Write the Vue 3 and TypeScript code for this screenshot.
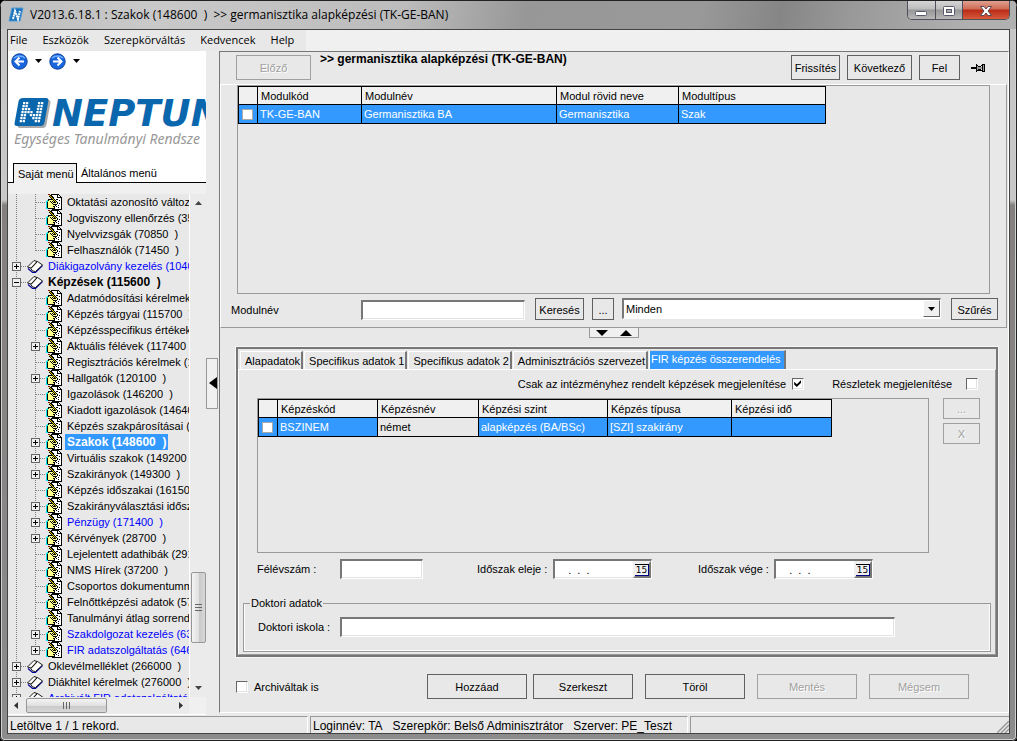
<script setup lang="ts">
import { ref } from 'vue'

interface TreeRow {
  label: string
  level: 1 | 2
  box?: '+' | '-'
  tone?: 'link' | 'strong' | 'selected'
  last?: boolean
}

const menu = ['File', 'Eszközök', 'Szerepkörváltás', 'Kedvencek', 'Help']

const tree: TreeRow[] = [
  { label: 'Oktatási azonosító változa', level: 2 },
  { label: 'Jogviszony ellenőrzés (350', level: 2 },
  { label: 'Nyelvvizsgák (70850  )', level: 2 },
  { label: 'Felhasználók (71450  )', level: 2, last: true },
  { label: 'Diákigazolvány kezelés (1040', level: 1, box: '+', tone: 'link' },
  { label: 'Képzések (115600  )', level: 1, box: '-', tone: 'strong' },
  { label: 'Adatmódosítási kérelmek', level: 2 },
  { label: 'Képzés tárgyai (115700  )', level: 2 },
  { label: 'Képzésspecifikus értékek', level: 2 },
  { label: 'Aktuális félévek (117400', level: 2, box: '+' },
  { label: 'Regisztrációs kérelmek (1', level: 2 },
  { label: 'Hallgatók (120100  )', level: 2, box: '+' },
  { label: 'Igazolások (146200  )', level: 2 },
  { label: 'Kiadott igazolások (14640', level: 2 },
  { label: 'Képzés szakpárosításai (1', level: 2 },
  { label: 'Szakok (148600  )', level: 2, box: '+', tone: 'selected' },
  { label: 'Virtuális szakok (149200  )', level: 2, box: '+' },
  { label: 'Szakirányok (149300  )', level: 2, box: '+' },
  { label: 'Képzés időszakai (161500', level: 2 },
  { label: 'Szakirányválasztási idősza', level: 2, box: '+' },
  { label: 'Pénzügy (171400  )', level: 2, box: '+', tone: 'link' },
  { label: 'Kérvények (28700  )', level: 2, box: '+' },
  { label: 'Lejelentett adathibák (291', level: 2 },
  { label: 'NMS Hírek (37200  )', level: 2 },
  { label: 'Csoportos dokumentumme', level: 2 },
  { label: 'Felnőttképzési adatok (57', level: 2 },
  { label: 'Tanulmányi átlag sorrend (', level: 2 },
  { label: 'Szakdolgozat kezelés (637', level: 2, box: '+', tone: 'link' },
  { label: 'FIR adatszolgáltatás (6460', level: 2, box: '+', tone: 'link', last: true },
  { label: 'Oklevélmelléklet (266000  )', level: 1, box: '+' },
  { label: 'Diákhitel kérelmek (276000  )', level: 1, box: '+' },
  { label: 'Archivált FIR adatszolgáltatás', level: 1, box: '+', tone: 'link' },
]

// Form icon: a hand with a pen over a sheet, one character per pixel.
const formBitmap = [
  '..RR.KKKKKKKK...',
  '...GKKWWWWWKWK..',
  '...KGKKWWWWKWWK.',
  '....KGKKWWWKKKKK',
  '.....KGKWWWWWWWK',
  '..KKKKKGKWKKWWWK',
  '.CKYYYYKGKWWWKWK',
  'CCYYKYKYKGKWWWWK',
  'CKYYYKYKKKYKWWWK',
  'CKYYYYKYYYYKWKWK',
  'CKYYYYYKKKKWWWWK',
  'CKYYYYYYYKWWKWWK',
  'CKYYYYYKKWKWWWWK',
  'CKYYYYYYKWWWKWWK',
  'CCKKKKKKKWWWWWWK',
  '......KKKKKKKKKK',
]
const inks: Record<string, string> = { K: '#000', W: '#fff', Y: '#ffff90', C: '#00e0e8', R: '#901020', G: '#e8c800' }
const formLayers = Object.entries(inks).map(([key, fill]) => ({
  fill,
  d: formBitmap.flatMap((line, y) => [...line].map((c, x) => (c === key ? `M${x} ${y}h1v1h-1z` : ''))).join(''),
}))

const logoDots: [number, number][] = []
const pattern = ['1100011', '1100011', '1110011', '1111011', '1101111', '1100111', '1100011']
pattern.forEach((line, y) => [...line].forEach((c, x) => c === '1' && logoDots.push([x, y])))

const tabs = ['Alapadatok', 'Specifikus adatok 1', 'Specifikus adatok 2', 'Adminisztrációs szervezet', 'FIR képzés összerendelés']
const activeTab = ref(4)
const onlyAssigned = ref(true)
const details = ref(false)
const archived = ref(false)
const filter = ref('Minden')
const dateStart = ref('   .  .  .')
const dateEnd = ref('   .  .  .')
</script>

<template>
  <div class="window">
    <header class="titlebar">
      <svg class="app-icon" width="16" height="16" viewBox="0 0 16 16">
        <path d="M4 1h11l-3 13H1z" fill="#1c74bd" stroke="#4f9bd6" />
        <path d="M5 12l2-8 3 8 2-8" fill="none" stroke="#fff" stroke-width="2" stroke-dasharray="2 0.6" />
      </svg>
      <h1>V2013.6.18.1 : Szakok (148600&nbsp; )&nbsp; &gt;&gt; germanisztika alapképzési (TK-GE-BAN)</h1>
      <div class="caption-buttons">
        <button type="button" aria-label="Kis méret">
          <svg width="27" height="17" viewBox="0 0 27 17"><rect x="7.500" y="9.500" width="11" height="4" rx="1" fill="#fff" stroke="#55596b" /></svg>
        </button>
        <button type="button" aria-label="Teljes méret">
          <svg width="26" height="17" viewBox="0 0 26 17">
            <rect x="7.500" y="4.500" width="11" height="9" rx="1" fill="#fff" stroke="#55596b" />
            <rect x="10.500" y="7.500" width="5" height="3" fill="#aaa" stroke="#55596b" />
          </svg>
        </button>
        <button type="button" class="close" aria-label="Bezárás">
          <svg width="46" height="17" viewBox="0 0 46 17"><path d="M17.500 4.500h3.500l2 2.500 2-2.500h3.500l-3.500 4.500 3.500 4.500h-3.500l-2-2.500-2 2.500h-3.500l3.500-4.500z" fill="#fff" stroke="#5b4a55" /></svg>
        </button>
      </div>
    </header>

    <div class="client">
      <nav class="menubar">
        <div class="menu-items">
          <button v-for="m in menu" :key="m" type="button">{{ m }}</button>
        </div>
      </nav>

      <div class="main">
        <aside class="side">
          <div class="nav-tools">
            <button type="button" aria-label="Vissza">
              <svg width="17" height="17" viewBox="0 0 17 17">
                <circle cx="8.500" cy="8.500" r="7.700" fill="#1a66dd" stroke="#0b3f9c" />
                <path d="M3 5a7 5 0 0 1 11 0" stroke="#6fb0ff" fill="none" stroke-width="1.500" />
                <path d="M13 8.500H5M8.500 4.500l-4 4 4 4" fill="none" stroke="#fff" stroke-width="2" />
              </svg>
            </button>
            <svg class="drop" width="7" height="4" viewBox="0 0 7 4"><path d="M0 0h7L3.500 4z" /></svg>
            <button type="button" aria-label="Előre">
              <svg width="17" height="17" viewBox="0 0 17 17">
                <circle cx="8.500" cy="8.500" r="7.700" fill="#1a66dd" stroke="#0b3f9c" />
                <path d="M3 5a7 5 0 0 1 11 0" stroke="#6fb0ff" fill="none" stroke-width="1.500" />
                <path d="M4 8.500h8M8.500 4.500l4 4-4 4" fill="none" stroke="#fff" stroke-width="2" />
              </svg>
            </button>
            <svg class="drop" width="7" height="4" viewBox="0 0 7 4"><path d="M0 0h7L3.500 4z" /></svg>
          </div>

          <div class="brand">
            <div class="brand-name">
              <svg width="38" height="33" viewBox="0 0 38 33">
                <path d="M11 3h23q3 0 2.400 3l-4 22q-.6 3-4 3H6q-3 0-2.400-3l4-22Q8 3 11 3z" fill="#aaa" />
                <path d="M9 1h23q3 0 2.400 3l-4 22q-.6 3-4 3H3q-3 0-2.400-3l4-22Q5.500 1 9 1z" fill="#0a67ae" />
                <g fill="#fff">
                  <rect v-for="([x, y], i) in logoDots" :key="i" :x="9 + x * 3 - y * 0.55" :y="5 + y * 3" width="2.300" height="2.300" rx="0.600" />
                </g>
              </svg>
              <span>NEPTUN</span>
            </div>
            <p>Egységes Tanulmányi Rendsze</p>
          </div>

          <div class="side-tabs" role="tablist">
            <button type="button" role="tab" aria-selected="true" class="on">Saját menü</button>
            <button type="button" role="tab" aria-selected="false">Általános menü</button>
          </div>

          <div class="tree-wrap">
            <ul class="tree" role="tree">
              <li v-for="(row, i) in tree" :key="i" role="treeitem" :class="row.tone">
                <svg :width="row.level === 1 ? 38 : 57" height="16" :viewBox="`0 0 ${row.level === 1 ? 38 : 57} 16`" shape-rendering="crispEdges">
                  <g stroke="#808080" stroke-dasharray="1 1">
                    <path d="M8.500 0v16" />
                    <path v-if="row.level === 1" d="M9 8.500h10" />
                    <path v-if="row.level === 2" :d="row.last ? 'M27.500 0v9' : 'M27.500 0v16'" />
                    <path v-if="row.level === 2" d="M28 8.500h10" />
                    <path v-if="row.box === '-'" d="M27.500 13v3" />
                  </g>
                  <g v-if="row.box" :transform="`translate(${row.level === 1 ? 4 : 23} 4)`">
                    <rect x="0.500" y="0.500" width="8" height="8" fill="#f0f0f0" stroke="#666" />
                    <path :d="row.box === '+' ? 'M2 4.500h5M4.500 2v5' : 'M2 4.500h5'" stroke="#000" />
                  </g>
                  <g v-if="row.level === 1" transform="translate(19 1)" shape-rendering="auto">
                    <path d="M1 9.500l4.500 4h3l7-7" fill="none" stroke="#0000a0" stroke-width="1.200" />
                    <path d="M.5 8L7 1.500l3 1L4 9z" fill="#fff" stroke="#000" stroke-width="0.900" />
                    <path d="M4 9.500l6.500-7 5 3.500-7 6.500-3-.5z" fill="#fff" stroke="#000" stroke-width="0.900" />
                  </g>
                  <g v-else transform="translate(38 0)">
                    <path v-for="layer in formLayers" :key="layer.fill" :d="layer.d" :fill="layer.fill" />
                  </g>
                </svg>
                <span>{{ row.label }}</span>
              </li>
            </ul>
            <div class="vscroll">
              <svg width="7" height="4" viewBox="0 0 7 4"><path d="M0 4h7L3.500 0z" fill="#444" /></svg>
              <div class="v-track"><i class="thumb"><b></b></i></div>
              <svg width="7" height="4" viewBox="0 0 7 4"><path d="M0 0h7L3.500 4z" fill="#444" /></svg>
            </div>
          </div>
          <div class="hscroll">
            <svg width="4" height="7" viewBox="0 0 4 7"><path d="M4 0v7L0 3.500z" fill="#333" /></svg>
            <div class="h-track"><i class="thumb"><b></b></i></div>
            <svg width="4" height="7" viewBox="0 0 4 7"><path d="M0 0v7l4-3.500z" fill="#333" /></svg>
          </div>
        </aside>

        <div class="divider">
          <button type="button" aria-label="Menü elrejtése">
            <svg width="8" height="12" viewBox="0 0 8 12"><path d="M8 0v12L0 6z" /></svg>
          </button>
        </div>

        <main class="work">
          <div class="work-head">
            <button type="button" class="btn prev" disabled>Előző</button>
            <h2>&gt;&gt; germanisztika alapképzési (TK-GE-BAN)</h2>
            <button type="button" class="btn refresh">Frissítés</button>
            <button type="button" class="btn next">Következő</button>
            <button type="button" class="btn up">Fel</button>
            <button type="button" class="pin" aria-label="Rögzítés">
              <svg width="15" height="10" viewBox="0 0 15 10" shape-rendering="crispEdges">
                <path d="M0 4h5v2H0zM5 1h1v8H5zM6 2h1v1H6zM6 7h1v1H6zM7 3h3v1H7zM7 6h3v2H7zM10 2h1v1h-1zM10 7h1v1h-1zM11 1h3v1h-3zM11 8h3v1h-3zM11 2h1v6h-1zM13 2h1v6h-1z" />
                <path d="M6 3h1v4H6zM7 4h4v2H7zM12 2h1v6h-1z" fill="#999" />
              </svg>
            </button>
          </div>

          <section class="upper">
            <div class="list list-top">
              <table>
                <colgroup><col class="w19" /><col class="w104" /><col class="w195" /><col class="w122" /><col class="w147" /></colgroup>
                <thead>
                  <tr><th></th><th>Modulkód</th><th>Modulnév</th><th>Modul rövid neve</th><th>Modultípus</th></tr>
                </thead>
                <tbody>
                  <tr>
                    <td><input type="checkbox" class="flat" aria-label="TK-GE-BAN kijelölése" /></td>
                    <td>TK-GE-BAN</td><td>Germanisztika BA</td><td>Germanisztika</td><td>Szak</td>
                  </tr>
                </tbody>
              </table>
            </div>
            <div class="filter">
              <label for="modulnev">Modulnév</label>
              <input id="modulnev" type="text" class="sunk" />
              <button type="button" class="btn search">Keresés</button>
              <button type="button" class="btn more">...</button>
              <div class="combo">
                <select v-model="filter" aria-label="Szűrő"><option>Minden</option></select>
                <span><svg width="7" height="4" viewBox="0 0 7 4"><path d="M0 0h7L3.500 4z" /></svg></span>
              </div>
              <button type="button" class="btn filt">Szűrés</button>
            </div>
          </section>

          <div class="h-divider">
            <button type="button" aria-label="Panel méretezése">
              <svg width="12" height="6" viewBox="0 0 12 6"><path d="M0 0h12L6 6z" /></svg>
              <svg width="12" height="6" viewBox="0 0 12 6"><path d="M0 6h12L6 0z" /></svg>
            </button>
          </div>

          <section class="tabset">
            <div class="tabs" role="tablist">
              <button
                v-for="(t, i) in tabs"
                :key="t"
                type="button"
                role="tab"
                :aria-selected="i === activeTab"
                :class="{ on: i === activeTab }"
                @click="activeTab = i"
              >{{ t }}</button>
            </div>
            <div class="page">
              <div class="options">
                <label for="assigned">Csak az intézményhez rendelt képzések megjelenítése</label>
                <input id="assigned" v-model="onlyAssigned" type="checkbox" />
                <label for="details" class="second">Részletek megjelenítése</label>
                <input id="details" v-model="details" type="checkbox" class="far" />
              </div>
              <div class="list-row">
                <div class="list">
                  <table>
                    <colgroup><col class="w19" /><col class="w100" /><col class="w101" /><col class="w129" /><col class="w124" /><col class="w100" /></colgroup>
                    <thead>
                      <tr><th></th><th>Képzéskód</th><th>Képzésnév</th><th>Képzési szint</th><th>Képzés típusa</th><th>Képzési idő</th></tr>
                    </thead>
                    <tbody>
                      <tr>
                        <td><input type="checkbox" class="flat" aria-label="BSZINEM kijelölése" /></td>
                        <td>BSZINEM</td><td class="current">német</td><td>alapképzés (BA/BSc)</td><td>[SZI] szakirány</td><td></td>
                      </tr>
                    </tbody>
                  </table>
                </div>
                <div class="list-actions">
                  <button type="button" class="btn" disabled>...</button>
                  <button type="button" class="btn" disabled>X</button>
                </div>
              </div>
              <div class="fields">
                <label for="felev" class="lead">Félévszám :</label>
                <input id="felev" type="text" class="sunk felev" />
                <label for="eleje" class="start">Időszak eleje :</label>
                <div class="date sunk">
                  <input id="eleje" v-model="dateStart" type="text" />
                  <button type="button" aria-label="Időszak eleje naptár"><span>15</span></button>
                </div>
                <label for="vege" class="end">Időszak vége :</label>
                <div class="date sunk">
                  <input id="vege" v-model="dateEnd" type="text" />
                  <button type="button" aria-label="Időszak vége naptár"><span>15</span></button>
                </div>
              </div>
              <fieldset>
                <legend>Doktori adatok</legend>
                <label for="iskola">Doktori iskola :</label>
                <input id="iskola" type="text" class="sunk" />
              </fieldset>
            </div>
          </section>

          <footer class="actions">
            <input id="archiv" v-model="archived" type="checkbox" />
            <label for="archiv">Archiváltak is</label>
            <div class="action-buttons">
              <button type="button" class="btn">Hozzáad</button>
              <button type="button" class="btn">Szerkeszt</button>
            </div>
            <div class="action-buttons wide">
              <button type="button" class="btn">Töröl</button>
              <button type="button" class="btn" disabled>Mentés</button>
              <button type="button" class="btn" disabled>Mégsem</button>
            </div>
          </footer>
        </main>
      </div>

      <div class="status">
        <p class="s1">Letöltve 1 / 1 rekord.</p>
        <p class="s2">Loginnév: TA&nbsp;&nbsp; Szerepkör: Belső Adminisztrátor&nbsp;&nbsp; Szerver: PE_Teszt</p>
        <p class="s3">
          <svg width="12" height="12" viewBox="0 0 12 12"><path d="M0 12L12 0M4 12l8-8M8 12l4-4" stroke="#999" stroke-width="1.500" /></svg>
        </p>
      </div>
    </div>
  </div>
</template>

<style>
html,
body,
#app {
  height: 100%;
}
body {
  margin: 0;
  background: #000;
}
</style>

<style scoped>
* {
  box-sizing: border-box;
}
.window {
  min-height: 100%;
  display: flex;
  flex-direction: column;
  padding: 0 7px 7px;
  background: linear-gradient(#c4c4c4 0, #c8c8c8 200px, #84807f 205px, #8c8c8c 100%);
  box-shadow: inset 0 0 0 1px #222, inset 0 0 0 2px #d0d0d0;
  border-radius: 7px 7px 5px 5px;
  font: 11px/14px "Liberation Sans", Arial, sans-serif;
  color: #000;
  overflow: hidden;
}
button,
input,
select {
  font: inherit;
  color: inherit;
  margin: 0;
  padding: 0;
  border: 0;
  border-radius: 0;
  background: none;
}
svg {
  display: block;
  flex: none;
}
label,
h2,
th,
td,
button {
  white-space: nowrap;
}
p,
h1,
h2,
ul {
  margin: 0;
  padding: 0;
}

/* title bar */
.titlebar {
  height: 29px;
  margin: 0 -6px;
  padding: 1px 6px 0;
  display: flex;
  align-items: flex-start;
  background: linear-gradient(100deg, #bdbdbd 0, #c9c9c9 150px, #bcbcbc 400px, #979797 520px, #999 690px, #868686 770px, #999 840px, #b0b0b0 960px);
  border-top: 1px solid #222;
}
.app-icon {
  margin: 5px 6px 0 1px;
}
h1 {
  flex: 1;
  font: 12px/16px "Open Sans", "Noto Sans", sans-serif;
  margin-top: 5px;
  white-space: nowrap;
  overflow: hidden;
}
.caption-buttons {
  display: flex;
  margin-top: -1px;
  border: 1px solid #50505a;
  border-top: 0;
  border-radius: 0 0 5px 5px;
  overflow: hidden;
}
.caption-buttons button {
  height: 18px;
  background: linear-gradient(#d5d5d5 0, #bcbcbc 45%, #969696 50%, #b8b8b8 100%);
  border-right: 1px solid #50505a;
}
.caption-buttons .close {
  border-right: 0;
  background: linear-gradient(#e0a090 0, #cf6a55 45%, #b92a14 50%, #d65a3c 100%);
}

.client {
  flex: 1;
  display: flex;
  flex-direction: column;
  border: 1px solid #444;
  background: #e8e8e8;
}

.menubar {
  height: 21px;
  background: #f0f0f0;
}
.menu-items {
  width: 298px;
  height: 21px;
  padding: 0 2px;
  display: flex;
  gap: 15px;
  background: #e8e8e8;
  font: 11px/19px "Open Sans", "Noto Sans", sans-serif;
}
.menu-items button {
  height: 19px;
}

.main {
  flex: 1;
  display: flex;
  min-height: 0;
}

/* left side */
.side {
  width: 198px;
  flex: none;
  display: flex;
  flex-direction: column;
  padding-bottom: 1px;
  background: #fff;
}
.nav-tools {
  display: flex;
  align-items: center;
  height: 20px;
  padding-left: 3px;
}
.nav-tools .drop {
  margin: 0 7px;
}
.brand {
  height: 92px;
  padding: 26px 0 0 6px;
  overflow: hidden;
}
.brand-name {
  display: flex;
  height: 34px;
  color: #0a67ae;
  font: italic bold 37px/34px "DejaVu Sans", Verdana, sans-serif;
}
.brand p {
  color: #999;
  font: italic 14px/16px "Noto Sans", "Open Sans", sans-serif;
  white-space: nowrap;
}
.side-tabs {
  display: flex;
  align-items: flex-end;
  height: 20px;
  padding-left: 5px;
  box-shadow: inset 0 -1px #000;
}
.side-tabs button {
  height: 20px;
  padding: 0 4px;
}
.side-tabs .on {
  width: 64px;
  border: 1px solid #000;
  border-bottom: 0;
  background: #f0f0f0;
}
.tree-wrap {
  flex: 1 1 0;
  min-height: 0;
  display: flex;
  border-top: 11px solid #f0f0f0;
  background: #e8e8e8;
}
.tree {
  flex: 1;
  min-width: 0;
  list-style: none;
  overflow: hidden;
}
.tree li {
  display: flex;
  height: 16px;
  line-height: 16px;
  white-space: pre;
}
.tree span {
  padding: 0 2px;
}
.tree .link {
  color: #0000ff;
}
.tree .strong,
.tree .selected {
  font-weight: bold;
  font-size: 12px;
}
.tree .selected span {
  background: #3399ff;
  color: #fff;
}
.vscroll {
  width: 17px;
  display: flex;
  flex-direction: column;
  align-items: center;
  padding: 7px 0;
  border-left: 1px solid #fff;
  background: #ebebeb;
}
.v-track {
  flex: 1;
  width: 15px;
  display: flex;
  flex-direction: column;
  justify-content: flex-end;
  padding-bottom: 43px;
}
.thumb {
  display: flex;
  align-items: center;
  justify-content: center;
  border: 1px solid #979797;
  border-radius: 2px;
}
.v-track .thumb {
  height: 71px;
  background: linear-gradient(90deg, #f4f4f4, #e0e0e0 50%, #c8c8c8 51%, #d8d8d8);
}
.v-track b {
  width: 7px;
  height: 8px;
  background: repeating-linear-gradient(#666 0 1px, transparent 1px 3px);
}
.hscroll {
  height: 17px;
  flex: none;
  width: 181px;
  padding: 0 6px;
  display: flex;
  align-items: center;
  background: #ebebeb;
  box-shadow: 17px 0 #f0f0f0;
}
.h-track {
  flex: 1;
  padding-left: 8px;
}
.h-track .thumb {
  width: 81px;
  height: 15px;
  background: linear-gradient(#f4f4f4, #e0e0e0 50%, #c8c8c8 51%, #d8d8d8);
}
.h-track b {
  width: 8px;
  height: 7px;
  background: repeating-linear-gradient(90deg, #666 0 1px, transparent 1px 3px);
}

.divider {
  width: 13px;
  flex: none;
  display: flex;
  align-items: center;
  background: #ebebeb;
}
.divider button {
  width: 12px;
  height: 51px;
  padding-left: 2px;
  border: 1px solid #999;
  background: #f0f0f0;
}

/* right side */
.work {
  flex: 1;
  min-width: 0;
  display: flex;
  flex-direction: column;
  margin-bottom: 2px;
  border-left: 1px solid #777;
  border-top: 1px solid #777;
  border-bottom: 1px solid #fff;
  border-right: 1px solid #fff;
}
.btn {
  border: 1px solid #606060;
  background: #e8e8e8;
  padding: 1px 0 0;
}
.btn:disabled {
  border-color: #a0a0a0;
  color: #a0a0a0;
  text-shadow: 1px 1px #fff;
}
.work-head {
  height: 32px;
  padding: 3px 22px 0 16px;
  display: flex;
  align-items: flex-start;
}
.work-head .btn {
  height: 25px;
  margin-right: 7px;
}
.work-head .prev {
  width: 75px;
  margin-right: 9px;
}
.work-head h2 {
  flex: 1;
  font-size: 12px;
  line-height: 14px;
  margin-top: -3px;
}
.work-head .refresh { width: 49px; }
.work-head .next { width: 65px; }
.work-head .up { width: 41px; margin-right: 11px; }
.pin {
  height: 25px;
}
.upper {
  border: 1px solid #fff;
  border-right-color: #999;
  border-bottom-color: #999;
  margin-right: 1px;
}
.list {
  border: 1px solid #999;
}
.list-top {
  height: 209px;
  margin: 0 16px;
}
table {
  border-collapse: collapse;
  table-layout: fixed;
  width: 0;
}
.w19 { width: 19px; }
.w100 { width: 100px; }
.w101 { width: 101px; }
.w104 { width: 104px; }
.w122 { width: 122px; }
.w124 { width: 124px; }
.w129 { width: 129px; }
.w147 { width: 147px; }
.w195 { width: 195px; }
th,
td {
  border: 1px solid #000;
  text-align: left;
  font-weight: normal;
  height: 18px;
  line-height: 15px;
  padding: 1px 0 0 3px;
}
th {
  background: #f0f0f0;
}
tbody tr {
  background: #3399ff;
  color: #fff;
}
td {
  height: 19px;
  padding-left: 2px;
}
td:first-child {
  padding: 0 0 0 3px;
}
td .flat {
  display: block;
}
.current {
  background: #e8e8e8;
  color: #000;
}
.filter {
  height: 33px;
  padding: 4px 8px 0 10px;
  display: flex;
}
.filter label {
  width: 130px;
  line-height: 24px;
}
.filter .sunk {
  width: 164px;
  margin: 2px 10px 0 0;
}
.filter .btn {
  height: 22px;
}
.search { width: 49px; margin-right: 8px; }
.more { width: 22px; margin-right: 8px; }
.filt { width: 47px; }
.sunk {
  height: 20px;
  background: #fff;
  border: 1px solid #fff;
  border-top: 2px solid #777;
  border-left: 2px solid #777;
  box-shadow: inset -1px -1px #e3e3e3;
}
.combo {
  position: relative;
  flex: 1;
  height: 21px;
  margin-right: 10px;
}
.combo select {
  appearance: none;
  display: block;
  width: 100%;
  height: 21px;
  padding-left: 2px;
  background: #fff;
  border: 1px solid #fff;
  border-top: 2px solid #777;
  border-left: 2px solid #777;
}
.combo span {
  position: absolute;
  right: 1px;
  top: 2px;
  width: 17px;
  height: 17px;
  display: flex;
  align-items: center;
  justify-content: center;
  background: #f0f0f0;
  border: 1px solid #fff;
  border-right-color: #666;
  border-bottom-color: #666;
  pointer-events: none;
}
.h-divider {
  height: 19px;
  display: flex;
  justify-content: center;
  align-items: flex-start;
}
.h-divider button {
  width: 50px;
  height: 10px;
  display: flex;
  align-items: center;
  justify-content: center;
  gap: 12px;
  border: 1px solid #999;
  border-top: 0;
  background: #f0f0f0;
}

.tabset {
  flex: 1;
  display: flex;
  flex-direction: column;
  margin: 0 10px 0 16px;
  border: 2px solid #777;
  outline: 1px solid #f6f6f6;
  padding: 1px 0 0;
}
.tabs {
  display: flex;
  align-items: flex-end;
  height: 19px;
  padding-left: 1px;
}
.tabs button {
  height: 18px;
  padding: 2px 1px 0 4px;
  margin-left: 1px;
  line-height: 15px;
  border-left: 1px solid #fff;
  border-top: 1px solid #fff;
  border-right: 2px solid #777;
}
.tabs .on {
  height: 19px;
  width: 137px;
  text-align: left;
  padding: 0 0 2px 1px;
  border-top: 1px solid #d8d8d8;
  background: #3399ff;
  color: #fff;
}
.page {
  flex: 1;
  display: flex;
  flex-direction: column;
  border: 1px solid #fff;
  border-right-color: #999;
  border-bottom-color: #999;
  padding: 0 4px 2px;
}
.options {
  display: flex;
  align-items: center;
  justify-content: flex-end;
  height: 28px;
  padding-right: 13px;
}
input[type='checkbox'] {
  appearance: none;
  width: 12px;
  height: 12px;
  background: #fff;
  border: 1px solid #fff;
  border-top-color: #666;
  border-left-color: #666;
  box-shadow: inset -1px -1px #e3e3e3;
}
input[type='checkbox'].flat {
  width: 11px;
  height: 11px;
  border: 1px solid #aaa;
  box-shadow: none;
}
input[type='checkbox']:checked::after {
  content: '';
  display: block;
  width: 7px;
  height: 7px;
  margin: 1px;
  background: #000;
  clip-path: polygon(0 25%, 38% 62%, 100% 0, 100% 40%, 38% 100%, 0 65%);
}
.options input { margin-left: 6px; }
.options .second { margin-left: 28px; }
.options .far { margin-left: 14px; }
.list-row {
  flex: 1;
  display: flex;
  padding: 0 11px 0 14px;
}
.list-row .list {
  flex: 1;
}
.list-actions {
  width: 37px;
  margin-left: 14px;
  display: flex;
  flex-direction: column;
  gap: 4px;
}
.list-actions .btn {
  height: 21px;
}
.fields {
  display: flex;
  padding: 6px 0 0 14px;
  line-height: 20px;
}
.fields label { flex: none; }
.lead { width: 83px; }
.felev { width: 83px; }
.start { width: 76px; margin-left: 54px; }
.end { width: 76px; margin-left: 46px; }
.date {
  width: 99px;
  display: flex;
}
.date input {
  flex: 1;
  min-width: 0;
  padding-left: 4px;
}
.date button {
  width: 18px;
  height: 17px;
  background: #f0f0f0;
  border: 2px solid #f0f0f0;
  border-right-color: #777;
  border-bottom-color: #777;
}
.date button span {
  display: block;
  font: 9px/10px "DejaVu Sans", Verdana, sans-serif;
  border: 1px solid #000;
  border-left: 0;
  border-right-color: #000080;
  border-bottom-color: #000080;
}
fieldset {
  margin: 17px 0 0;
  padding: 7px 6px 14px 14px;
  border: 1px solid #999;
  box-shadow: inset -1px -1px #fff, inset 1px 0 #fff;
  display: flex;
  min-width: 0;
}
legend {
  margin-left: -8px;
  padding: 0 1px;
  line-height: 14px;
}
fieldset label {
  width: 82px;
  line-height: 20px;
}
fieldset .sunk {
  flex: 1;
  margin-right: 89px;
}
.actions {
  height: 55px;
  padding: 17px 39px 0 16px;
  display: flex;
  align-items: flex-start;
}
.actions label {
  margin-left: 6px;
  line-height: 26px;
  flex: 1;
}
.actions input {
  margin-top: 7px;
}
.action-buttons {
  display: flex;
  gap: 6px;
}
.action-buttons.wide {
  gap: 12px;
  margin-left: 12px;
}
.action-buttons .btn {
  width: 100px;
  height: 25px;
}

.status {
  height: 18px;
  padding-top: 1px;
  display: flex;
  gap: 2px;
  font-size: 12px;
  line-height: 18px;
  white-space: nowrap;
}
.status p {
  height: 17px;
  padding-left: 2px;
  border-top: 1px solid #999;
  border-left: 1px solid #999;
  border-right: 1px solid #fff;
}
.status .s1 {
  width: 300px;
  border-left: 0;
}
.status .s2 { width: 378px; }
.status .s3 {
  flex: 1;
  display: flex;
  justify-content: flex-end;
  align-items: flex-end;
  border-right: 0;
}
</style>
